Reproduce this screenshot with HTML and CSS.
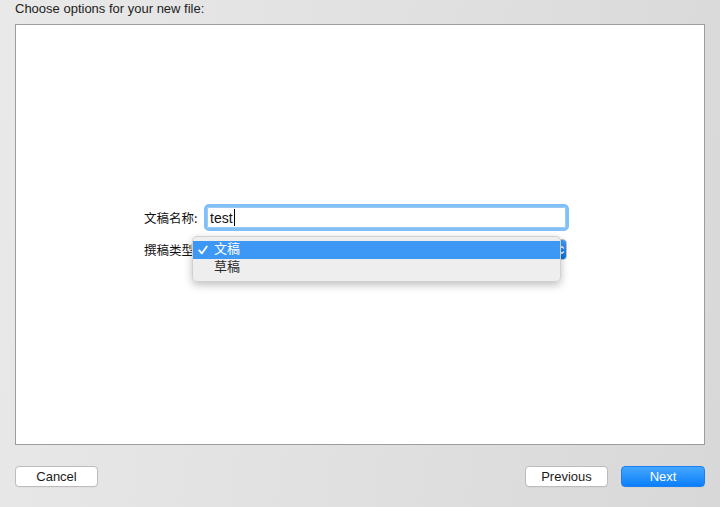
FILE: index.html
```html
<!DOCTYPE html>
<html>
<head>
<meta charset="utf-8">
<link rel="stylesheet" href="styles.css">
</head>
<body>
<div class="window">
  <div class="title">Choose options for your new file:</div>
  <div class="panel">
    <div class="form">
      <div class="row">
        <div class="label">文稿名称:</div>
        <div class="field"><span class="value">test</span><span class="caret"></span></div>
      </div>
      <div class="row row2">
        <div class="label">撰稿类型:</div>
        <div class="popup">
          <div class="popup-arrow">
            <svg width="6" height="10" viewBox="0 0 6 10"><path d="M1 3.5 L3 1.5 L5 3.5 M1 6.5 L3 8.5 L5 6.5" fill="none" stroke="#fff" stroke-width="1.2"/></svg>
          </div>
        </div>
        <div class="menu">
          <div class="item selected"><span class="check"><svg width="10" height="10" viewBox="0 0 10 10"><path d="M1.2 5.4 L3.8 8.4 L8.8 1.4" fill="none" stroke="#fff" stroke-width="1.8" stroke-linecap="round" stroke-linejoin="round"/></svg></span><span class="text">文稿</span></div>
          <div class="item"><span class="check"></span><span class="text">草稿</span></div>
        </div>
      </div>
    </div>
  </div>
  <div class="buttons">
    <div class="btn">Cancel</div>
    <div class="right">
      <div class="btn">Previous</div>
      <div class="btn primary">Next</div>
    </div>
  </div>
</div>
</body>
</html>
```
FILE: styles.css
```css
html, body {
  margin: 0;
  padding: 0;
}
body {
  width: 720px;
  height: 507px;
  overflow: hidden;
  font-family: "Liberation Sans", "Noto Sans CJK SC", Arial, sans-serif;
  font-size: 13px;
  color: #1a1a1a;
  background: linear-gradient(100deg, #e9e9e9 0%, #dfdfdf 60%, #d8d8d9 100%);
}
.window {
  padding: 0 15px;
  height: 507px;
  box-sizing: border-box;
  display: flex;
  flex-direction: column;
}
.title {
  height: 24px;
  line-height: 17px;
  color: #222;
}
.panel {
  height: 421px;
  box-sizing: border-box;
  border: 1px solid #9d9d9d;
  background: #fff;
  padding: 179px 0 0 128px;
}
.form {
  display: flex;
  flex-direction: column;
  gap: 8px;
}
.row {
  display: flex;
  align-items: center;
  position: relative;
}
.label {
  width: 60px;
  font-family: "Noto Sans CJK SC", sans-serif;
  font-size: 12.5px;
  color: #111;
  white-space: nowrap;
}
.field {
  width: 359px;
  height: 21px;
  margin: 3px 0 3px 3px;
  box-sizing: border-box;
  background: #fff;
  border: 1px solid #9cc9f2;
  outline: 3px solid #80c0f8;
  border-radius: 2px;
  display: flex;
  align-items: center;
  padding-left: 2px;
  font-size: 14px;
  color: #111;
}
.caret {
  width: 1px;
  height: 17px;
  background: #000;
  margin-left: 1px;
}
.row2 {
  height: 21px;
}
.popup {
  width: 363px;
  height: 21px;
  box-sizing: border-box;
  border: 1px solid #c4c4c4;
  border-radius: 4px;
  background: #fff;
  display: flex;
  justify-content: flex-end;
  overflow: hidden;
}
.popup-arrow {
  width: 16px;
  height: 100%;
  background: linear-gradient(#3e9df8, #0b6fe0);
  display: flex;
  align-items: center;
  justify-content: flex-end;
  padding-right: 1px;
  box-sizing: border-box;
}
.menu {
  position: absolute;
  left: 48px;
  top: -3px;
  width: 369px;
  box-sizing: border-box;
  padding: 4px 0 4px;
  background: rgba(238, 238, 238, 0.98);
  border: 1px solid rgba(0, 0, 0, 0.12);
  border-radius: 5px;
  box-shadow: 0 3px 8px rgba(0, 0, 0, 0.25);
  font-family: "Noto Sans CJK SC", sans-serif;
  font-size: 13px;
}
.item {
  height: 18px;
  display: flex;
  align-items: center;
  color: #2a2a2a;
}
.item .text {
  line-height: 18px;
  position: relative;
  top: -2px;
}
.item.selected {
  background: #3d97f4;
  color: #fff;
}
.check {
  width: 16px;
  padding-left: 5px;
  display: flex;
  align-items: center;
}
.buttons {
  margin-top: 21px;
  display: flex;
  justify-content: space-between;
}
.right {
  display: flex;
  gap: 13px;
}
.btn {
  width: 83px;
  height: 21px;
  box-sizing: border-box;
  border: 1px solid #bcbcbc;
  border-radius: 4px;
  background: #fff;
  display: flex;
  align-items: center;
  justify-content: center;
  font-size: 13px;
  color: #1a1a1a;
  box-shadow: 0 0.5px 0 rgba(0,0,0,0.05);
}
.btn.primary {
  width: 84px;
  border: 1px solid #1a7ff2;
  background: linear-gradient(#45a6fd, #0b7ffb);
  color: #fff;
}
```
